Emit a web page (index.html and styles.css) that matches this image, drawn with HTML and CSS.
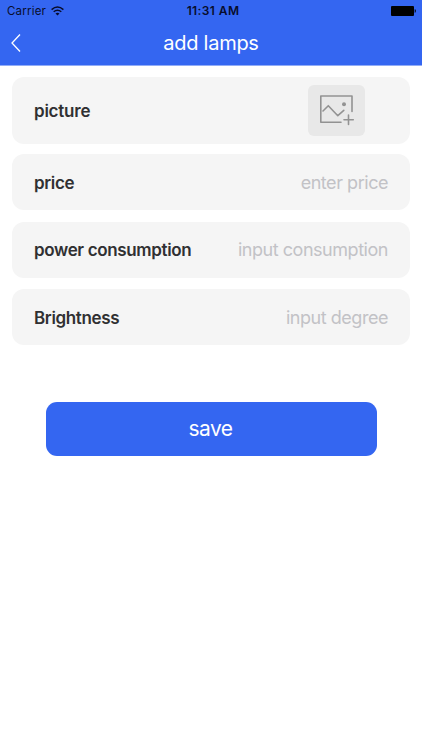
FILE: index.html
```html
<!DOCTYPE html>
<html lang="en">
<head>
<meta charset="utf-8">
<title>add lamps</title>
<link rel="stylesheet" href="styles.css">
</head>
<body>
<header class="header">
  <div class="status">
    <div class="carrier"><span class="carrier-name">Carrier</span>
      <svg class="wifi" width="13" height="10" viewBox="0 0 13 10"><path d="M.6 3.6Q6.5-1.6 12.4 3.6M2.7 5.8Q6.5 2.6 10.3 5.8" fill="none" stroke="#080d2c" stroke-width="1.5"/><path d="M4.5 7.6Q6.5 6 8.5 7.6L6.5 9.6Z" fill="#080d2c"/></svg>
    </div>
    <span class="time">11:31 AM</span>
    <svg class="battery" width="25" height="10" viewBox="0 0 25 10"><rect width="23" height="10" rx="1"/><path d="M23.7 3.3H24.2Q25.6 5 24.2 6.7H23.7Z"/></svg>
  </div>
  <div class="nav">
    <svg class="back" width="10" height="18" viewBox="0 0 10 18"><path d="M9 .5L1 9l8 8.5" fill="none" stroke="#fff" stroke-width="1.3"/></svg>
    <h1 class="title">add lamps</h1>
    <span></span>
  </div>
</header>
<main class="form">
  <div class="row row-picture"><span class="label label-picture">picture</span>
    <div class="upload"><svg width="57" height="51" viewBox="0 0 57 51" fill="none" stroke="#929292" stroke-width="1.6" stroke-linecap="round" stroke-linejoin="round"><path d="M33 37.2H12.8V11H44v15.5M15 26l5.3-5.3 9.5 10 6-5.3M40.5 30v9.5M36 34.8h9.3"/><circle cx="36" cy="19.2" r="2" fill="#929292" stroke="none"/></svg></div>
  </div>
  <div class="row"><span class="label">price</span><span class="hint">enter price</span></div>
  <div class="row"><span class="label">power consumption</span><span class="hint">input consumption</span></div>
  <div class="row"><span class="label">Brightness</span><span class="hint">input degree</span></div>
  <button class="save">save</button>
</main>
</body>
</html>
```
FILE: styles.css
```css
* { box-sizing: border-box; }
body { margin: 0; background: #fff; font-family: Inter, "Liberation Sans", sans-serif; }
.header { height: 66px; background: #3466f1; border-bottom: 1px solid #91acf7; }
.status { height: 22px; padding: 0 6px 0 7px; display: grid; grid-template-columns: 1fr auto 1fr; align-items: center; color: #080d2c; font-size: 11.5px; }
.carrier { display: flex; align-items: center; gap: 5px; letter-spacing: 0.2px; }
.time { font-size: 12px; font-weight: 600; letter-spacing: 0.4px; padding: 0 0 1px 3px; }
.battery { justify-self: end; }
.nav { height: 42px; padding: 0 11px; display: grid; grid-template-columns: 1fr auto 1fr; align-items: center; }
.title { margin: 0; color: #fff; font-size: 20px; font-weight: 400; letter-spacing: -0.27px; }
.form { padding: 11px 12px; display: flex; flex-direction: column; gap: 11.4px; }
.row { height: 56px; padding: 0 22px; border-radius: 12px; background: #f5f5f5; display: flex; align-items: center; justify-content: space-between; }
.row-picture { height: 67px; padding-right: 45px; margin-bottom: -1.1px; }
.upload { width: 57px; height: 51px; margin-top: -1px; border-radius: 6px; background: #e8e8e8; }
.label { padding-top: 1.6px; font-size: 17px; font-weight: 600; color: #303032; letter-spacing: -0.35px; }
.label-picture { padding-top: 0; letter-spacing: -0.22px; }
.hint { font-size: 18px; color: #c2c2c6; letter-spacing: -0.46px; }
.save { width: 331px; height: 53.5px; margin: 45.6px auto 0; padding: 0 1px 1px 0; border: 0; border-radius: 11px; background: #3466f1; color: #fff; font: 400 21px Inter, sans-serif; letter-spacing: -0.5px; }
```
